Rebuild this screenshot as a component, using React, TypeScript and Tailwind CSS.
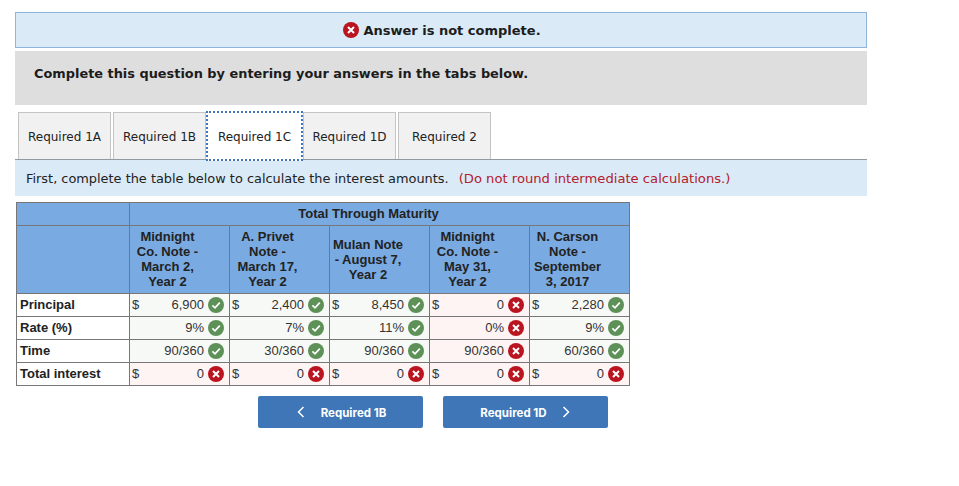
import React from "react";

const verdana = "font-['DejaVu_Sans',sans-serif]";

function Ok() {
  return (
    <svg width="16" height="16" viewBox="0 0 16 16" className="shrink-0">
      <circle cx="8" cy="8" r="8" fill="#5d9158" />
      <path d="M4.4 8.3 L7 10.8 L11.8 5.6" fill="none" stroke="#fff" strokeWidth="1.7" />
    </svg>
  );
}
function Bad({ size = 16 }: { size?: number }) {
  return (
    <svg width={size} height={size} viewBox="0 0 16 16" className="shrink-0">
      <circle cx="8" cy="8" r="8" fill="#b9141f" />
      <path d="M5 5 L11 11 M11 5 L5 11" fill="none" stroke="#fff" strokeWidth="2" />
    </svg>
  );
}

type Cell = { v: string; ok: boolean; d?: boolean };
const rows: { label: string; cells: Cell[] }[] = [
  {
    label: "Principal",
    cells: [
      { v: "6,900", ok: true, d: true },
      { v: "2,400", ok: true, d: true },
      { v: "8,450", ok: true, d: true },
      { v: "0", ok: false, d: true },
      { v: "2,280", ok: true, d: true },
    ],
  },
  {
    label: "Rate (%)",
    cells: [
      { v: "9%", ok: true },
      { v: "7%", ok: true },
      { v: "11%", ok: true },
      { v: "0%", ok: false },
      { v: "9%", ok: true },
    ],
  },
  {
    label: "Time",
    cells: [
      { v: "90/360", ok: true },
      { v: "30/360", ok: true },
      { v: "90/360", ok: true },
      { v: "90/360", ok: false },
      { v: "60/360", ok: true },
    ],
  },
  {
    label: "Total interest",
    cells: [
      { v: "0", ok: false, d: true },
      { v: "0", ok: false, d: true },
      { v: "0", ok: false, d: true },
      { v: "0", ok: false, d: true },
      { v: "0", ok: false, d: true },
    ],
  },
];

const heads = [
  ["Midnight", "Co. Note -", "March 2,", "Year 2"],
  ["A. Privet", "Note -", "March 17,", "Year 2"],
  ["Mulan Note", "- August 7,", "Year 2"],
  ["Midnight", "Co. Note -", "May 31,", "Year 2"],
  ["N. Carson", "Note -", "September", "3, 2017"],
];

const tabs = ["Required 1A", "Required 1B", "Required 1C", "Required 1D", "Required 2"];

export default function App() {
  return (
    <div className={`w-[959px] h-[486px] bg-white overflow-hidden pt-3 pl-[15px] ${verdana}`}>
      <div className="w-[852px]">
        <div className="h-9 border border-[#8fb4de] bg-[#daeaf7] flex items-center justify-center gap-[4px] pl-[2px] text-[13px] font-bold text-[#1c1c1c]">
          <Bad />
          <span className="pt-[1px]">Answer is not complete.</span>
        </div>
        <div className="mt-[3px] h-[54px] bg-[#dedede] pl-[19px] pt-[14px] text-[12.9px] leading-[18px] font-bold text-[#1c1c1c]">
          Complete this question by entering your answers in the tabs below.
        </div>
        <div className="mt-[7px] h-[47px] flex pl-[3px] text-[12px] text-[#222]">
          {tabs.map((t, i) =>
            i === 2 ? (
              <div
                key={t}
                className="relative z-10 w-[97px] h-[50px] -mt-[1px] bg-white border-2 border-dotted border-[#3e76b8] flex items-center justify-center pt-[1px]"
              >
                {t}
              </div>
            ) : (
              <div
                key={t}
                className={`h-[47px] w-[93px] bg-[#f1f1f1] border border-[#c4c4c4] border-b-0 flex items-center justify-center pt-[1px] ${
                  i === 1 || i === 4 ? "ml-[2px]" : ""
                }`}
              >
                {t}
              </div>
            )
          )}
        </div>
        <div className="h-[37px] border-t border-[#8f9aa5] bg-[#daeaf7] pl-[11px] pt-[1px] flex items-center text-[12.9px] text-[#222]">
          <span>First, complete the table below to calculate the interest amounts.</span>
          <span className="ml-[10px] text-[13.15px] text-[#b3202c]">(Do not round intermediate calculations.)</span>
        </div>
      </div>

      <table className="mt-[6px] ml-px w-[613px] table-fixed border-collapse border border-[#777] font-['Liberation_Sans',sans-serif] text-[13px] text-[#222]">
        <colgroup>
          <col className="w-[113px]" />
          <col className="w-[100px]" />
          <col className="w-[100px]" />
          <col className="w-[100px]" />
          <col className="w-[100px]" />
          <col className="w-[100px]" />
        </colgroup>
        <thead>
          <tr className="h-[23px] bg-[#79aae1]">
            <th className="border border-[#777]"></th>
            <th colSpan={5} className="border border-[#777] font-bold text-center leading-[15px] p-0 pr-[22px] pb-[2px]">
              Total Through Maturity
            </th>
          </tr>
          <tr className="h-[68px] bg-[#79aae1]">
            <th className="border border-[#777]"></th>
            {heads.map((h, i) => (
              <th
                key={i}
                className={`border border-[#777] font-bold text-center leading-[15px] p-0 ${
                  h.length === 3 ? "pr-[23px]" : "pr-[24px] pb-[2px]"
                }`}
              >
                {h.map((l, j) => (
                  <div key={j} className="whitespace-nowrap">{l}</div>
                ))}
              </th>
            ))}
          </tr>
        </thead>
        <tbody>
          {rows.map((r) => (
            <tr key={r.label} className="h-[23px]">
              <td className="border border-[#777] bg-white pl-[3px] font-bold whitespace-nowrap p-0">{r.label}</td>
              {r.cells.map((c, i) => (
                <td key={i} className={`border border-[#777] p-0 ${c.ok ? "bg-[#f7f9f6]" : "bg-[#fdf4f3]"}`}>
                  <div className="flex items-center h-[22px] pl-[2px] pr-[5px] text-[#333]">
                    {c.d && <span>$</span>}
                    <span className="ml-auto mr-[4px]">{c.v}</span>
                    {c.ok ? <Ok /> : <Bad />}
                  </div>
                </td>
              ))}
            </tr>
          ))}
        </tbody>
      </table>

      <div className="mt-[10px] ml-[243px] flex gap-[20px] font-['Inter',sans-serif] text-[11.5px] font-bold text-white">
        <button className="relative w-[165px] h-8 rounded-[2px] bg-[#3e76b8] flex items-center justify-center pl-[26px] pt-[3px]">
          <svg width="8" height="12" viewBox="0 0 8 12" className="absolute left-[39px] top-[10px]">
            <path d="M6.5 1 L1.5 6 L6.5 11" fill="none" stroke="#fff" strokeWidth="1.5" />
          </svg>
          Required 1B
        </button>
        <button className="relative w-[165px] h-8 rounded-[2px] bg-[#3e76b8] flex items-center justify-center pr-[24px] pt-[3px]">
          Required 1D
          <svg width="8" height="12" viewBox="0 0 8 12" className="absolute right-[38px] top-[10px]">
            <path d="M1.5 1 L6.5 6 L1.5 11" fill="none" stroke="#fff" strokeWidth="1.5" />
          </svg>
        </button>
      </div>
    </div>
  );
}
